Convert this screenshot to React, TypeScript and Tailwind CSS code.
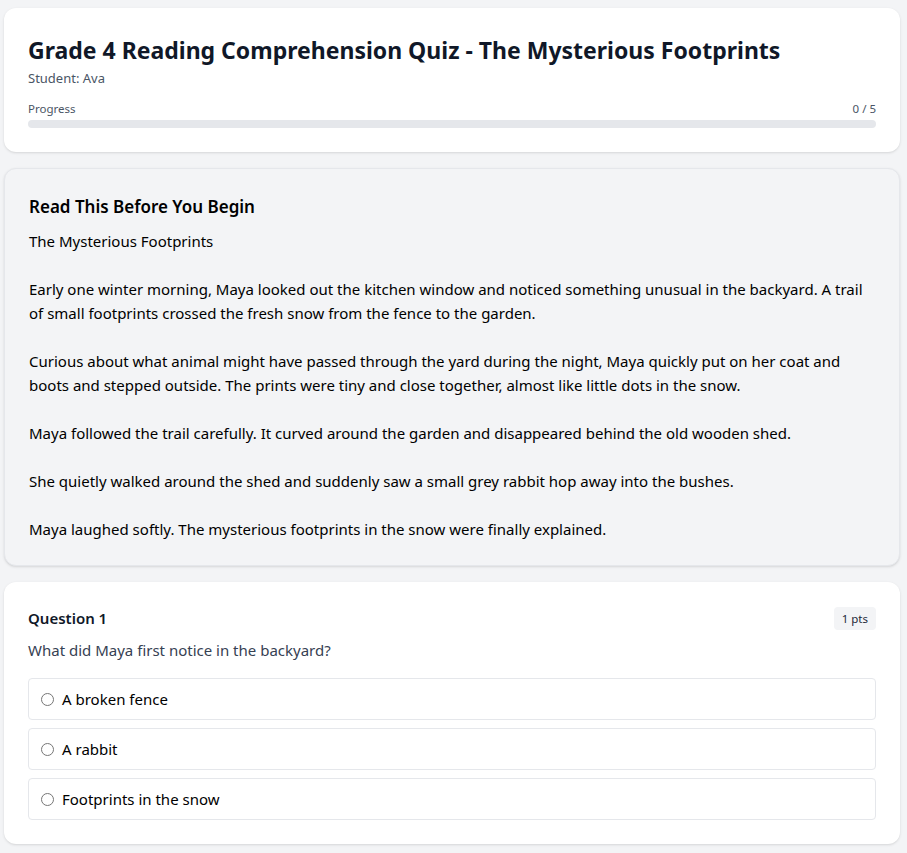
const passage = `The Mysterious Footprints

Early one winter morning, Maya looked out the kitchen window and noticed something unusual in the backyard. A trail of small footprints crossed the fresh snow from the fence to the garden.

Curious about what animal might have passed through the yard during the night, Maya quickly put on her coat and boots and stepped outside. The prints were tiny and close together, almost like little dots in the snow.

Maya followed the trail carefully. It curved around the garden and disappeared behind the old wooden shed.

She quietly walked around the shed and suddenly saw a small grey rabbit hop away into the bushes.

Maya laughed softly. The mysterious footprints in the snow were finally explained.`;

const options = ["A broken fence", "A rabbit", "Footprints in the snow"];

export default function App() {
  return (
    <div className="min-h-screen bg-gray-100 py-2 pl-1 pr-[7px] font-['Noto_Sans',sans-serif] text-gray-900">
      <div className="flex flex-col gap-4">
        <div className="rounded-xl bg-white p-6 shadow">
          <h1 className="text-[23px] leading-9 font-bold text-gray-900">
            Grade 4 Reading Comprehension Quiz - The Mysterious Footprints
          </h1>
          <p className="text-[13px] leading-5 text-gray-600">Student: Ava</p>
          <div className="mt-[13px]">
            <div className="mb-[3px] flex justify-between text-[11.5px] leading-4 text-gray-600">
              <span>Progress</span>
              <span>0 / 5</span>
            </div>
            <div className="h-2 w-full rounded-full bg-gray-200" />
          </div>
        </div>

        <div className="rounded-xl border border-gray-200 bg-gray-100 px-6 py-6 shadow">
          <h2 className="mb-2 text-[17px] leading-7 font-semibold text-black">Read This Before You Begin</h2>
          <p className="whitespace-pre-line text-[15px] leading-6 text-black">{passage}</p>
        </div>

        <div className="rounded-xl bg-white p-6 shadow">
          <div className="flex items-center justify-between">
            <h3 className="text-[15px] leading-6 font-semibold text-gray-900">Question 1</h3>
            <span className="rounded bg-gray-100 px-2 py-1 text-[11.5px] leading-[15px] text-gray-800">1 pts</span>
          </div>
          <p className="mt-2 text-[15px] leading-6 text-gray-700">What did Maya first notice in the backyard?</p>
          <div className="mt-4 flex flex-col gap-2">
            {options.map((o) => (
              <label key={o} className="flex items-center gap-2 rounded border border-gray-200 px-3 py-2">
                <input type="radio" name="q1" className="h-[13px] w-[13px]" />
                <span className="text-[15px] leading-6 text-black">{o}</span>
              </label>
            ))}
          </div>
        </div>
      </div>
    </div>
  );
}
